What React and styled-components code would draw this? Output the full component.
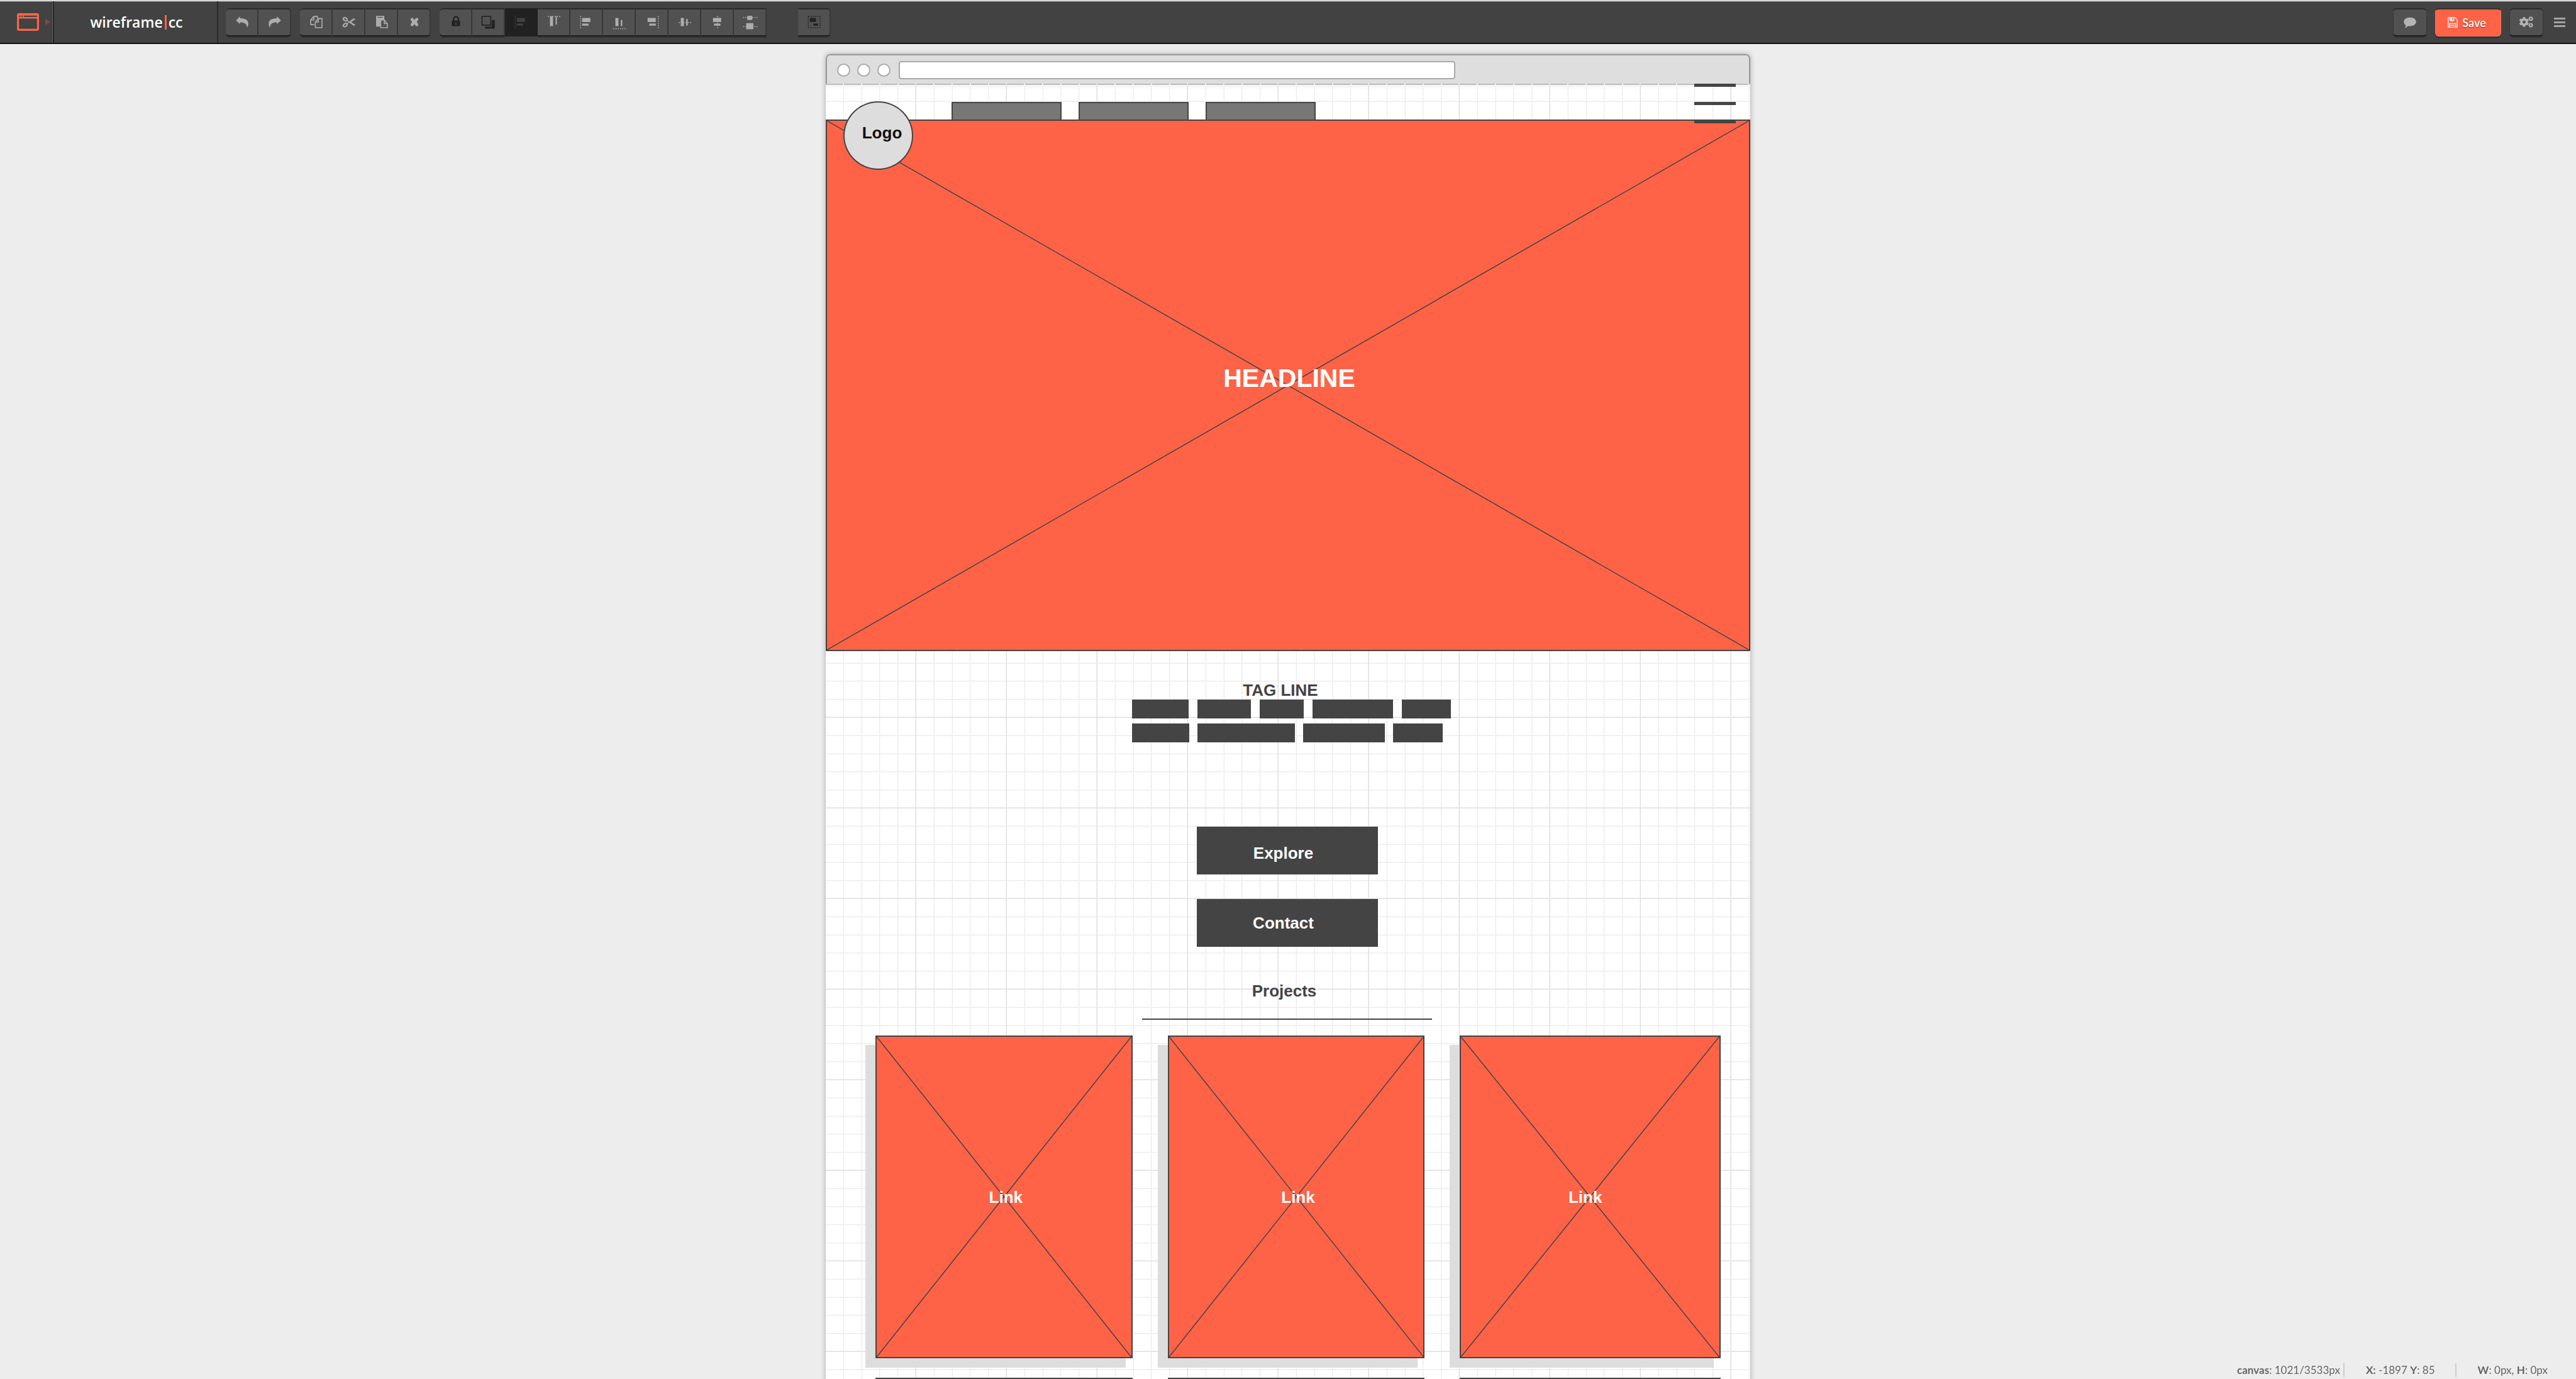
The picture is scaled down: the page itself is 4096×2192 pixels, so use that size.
import React from "react";
import styled, { createGlobalStyle, css } from "styled-components";
import { FaCogs } from "react-icons/fa";

const coral = "#ff6347";
const ink = "#444";
const lato = `Lato, "Open Sans", sans-serif`;
const helvetica = `"Liberation Sans", Arial, sans-serif`;

const GlobalStyle = createGlobalStyle`
  *, *::before, *::after { box-sizing: border-box; }
  body { margin: 0; background: #ededed; overflow: hidden; font-family: ${lato}; }
  button, input { font: inherit; margin: 0; padding: 0; }
  h1, h2, p { margin: 0; }
`;

const App = styled.div`
  display: flex;
  flex-direction: column;
  height: 100vh;
  overflow: hidden;
`;

/* ---------- toolbar ---------- */

const Toolbar = styled.header`
  flex: none;
  display: flex;
  align-items: stretch;
  height: 70px;
  background: #424242;
  border-top: 2px solid #dadada;
  border-bottom: 2px solid #111214;
  box-shadow: inset 0 1px 0 #777;
  padding-right: 17px;
`;

const ModeMenu = styled.button`
  display: flex;
  align-items: center;
  gap: 10px;
  width: 86px;
  padding-left: 27px;
  border: 0;
  border-right: 2px solid #292929;
  box-shadow: inset -1px 0 0 #5c5c5c;
  background: none;
`;

const Brand = styled.a`
  display: flex;
  align-items: center;
  justify-content: center;
  width: 261px;
  padding-left: 3px;
  border-right: 2px solid #292929;
  color: #fff;
  font: 600 23px/32px "Open Sans", "Noto Sans", sans-serif;
  text-decoration: none;
`;

const BrandBar = styled.span`
  width: 3px;
  height: 23px;
  margin: 0 3px;
  background: ${coral};
`;

const Tools = styled.div`
  display: flex;
  align-items: center;
  gap: 14px;
  padding-left: 12px;
`;

const ToolGroup = styled.div`
  display: flex;
  margin-left: ${(p) => (p.$apart ? "36px" : 0)};
`;

const raised = css`
  display: flex;
  align-items: center;
  justify-content: center;
  height: 45px;
  border: 0 solid #383838;
  border-top: 2px solid #2b2b2b;
  border-bottom: 2px solid #1e1e1e;
  background: #515151;
  box-shadow: 0 2px 0 #353535;
  color: #b4b4b4;
`;

const ToolButton = styled.button`
  ${raised}
  width: 52px;
  padding-left: 2px;
  border-right-width: 2px;
  color: ${(p) => (p.$off ? "#222" : "#adadad")};
  &:first-child {
    border-top-left-radius: ${(p) => (p.$squareStart ? 0 : "6px")};
    border-bottom-left-radius: ${(p) => (p.$squareStart ? 0 : "6px")};
  }
  &:last-child {
    border-top-right-radius: ${(p) => (p.$squareEnd ? 0 : "6px")};
    border-bottom-right-radius: ${(p) => (p.$squareEnd ? 0 : "6px")};
  }
  ${(p) =>
    p.$pressed &&
    css`
      background: #212121;
      border-color: #212121;
      box-shadow: none;
      color: #404040;
    `}
`;

const Actions = styled.div`
  display: flex;
  align-items: center;
  gap: 13px;
  margin-left: auto;
`;

const ActionButton = styled.button`
  ${raised}
  width: 54px;
  border-left-width: 1px;
  border-right-width: 1px;
  border-radius: 6px;
`;

const SaveButton = styled.button`
  display: flex;
  align-items: center;
  justify-content: center;
  gap: 7px;
  width: 105px;
  height: 45px;
  padding-right: 4px;
  border: 1px solid #fd7257;
  border-top: 2px solid #33302f;
  border-radius: 6px;
  background: ${coral};
  box-shadow: 0 3px 0 #353535;
  color: #f0f0f0;
  font: 700 18px/24px ${lato};
  text-shadow: 0 1px 1px rgba(90, 20, 10, 0.7);
`;

const PlainButton = styled.button`
  display: flex;
  margin-left: 4px;
  border: 0;
  background: none;
  color: #a3a3a3;
`;

/* ---------- browser frame ---------- */

const Workspace = styled.main`
  flex: 1;
  min-height: 0;
  display: flex;
  justify-content: center;
  align-items: flex-start;
  padding-top: 16px;
`;

const BrowserFrame = styled.div`
  width: 1470px;
  border-radius: 7px 7px 0 0;
  box-shadow: 0 0 9px rgba(0, 0, 0, 0.3);
`;

const BrowserBar = styled.div`
  display: flex;
  align-items: center;
  gap: 11px;
  height: 47px;
  padding: 2px 16px 0;
  border: 2px solid #999;
  border-bottom: 0;
  border-radius: 7px 7px 0 0;
  background: #dedede;
`;

const Dot = styled.span`
  width: 21px;
  height: 21px;
  border: 2px solid #ababab;
  border-radius: 50%;
  background: #fff;
`;

const AddressBox = styled.input`
  width: 885px;
  height: 29px;
  margin-left: 2px;
  border: 2px solid #a9a9a9;
  border-radius: 4px;
  background: #fff;
`;

const minor = (dir) => `linear-gradient(${dir},
  transparent 27px, #f8f8f8 27px, #f8f8f8 28px, #ececec 28px, #ececec 29px, transparent 29px,
  transparent 56px, #f8f8f8 56px, #f8f8f8 57px, #ececec 57px, #ececec 58px, transparent 58px,
  transparent 85px, #ececec 85px, #ececec 86px, #f8f8f8 86px, #f8f8f8 87px, transparent 87px,
  transparent 114px, #ececec 114px, #ececec 115px, #f8f8f8 115px, #f8f8f8 116px, transparent 116px)`;
const major = (dir) => `linear-gradient(${dir},
  transparent 142px, #efefef 142px, #efefef 143px, #dedede 143px, #dedede 144px)`;

const Canvas = styled.div`
  position: relative;
  height: 5088px;
  background:
    ${major("to right")} 0 0 / 144px 144px,
    ${major("to bottom")} 0 0 / 144px 144px,
    ${minor("to right")} 0 0 / 144px 144px,
    ${minor("to bottom")} 0 0 / 144px 144px,
    linear-gradient(#bdbdbd 2px, #f4f4f4 2px, #fff 10px) 0 0 / 100% 12px no-repeat,
    #fff;
  font-family: ${helvetica};
`;

/* ---------- wireframe content ---------- */

const NavRow = styled.div`
  display: flex;
  gap: 27px;
  height: 57px;
  padding: 29px 0 0 200px;
`;

const NavBlock = styled.div`
  width: 175px;
  border: 2px solid ${ink};
  border-bottom: 0;
  background: #777;
`;

const LogoCircle = styled.div`
  position: absolute;
  top: 28px;
  left: 28px;
  display: flex;
  align-items: center;
  justify-content: center;
  width: 111px;
  height: 109px;
  padding: 0 0 10px 12px;
  border: 2px solid ${ink};
  border-radius: 50%;
  background: #ddd;
  color: #111;
  font: 700 26px/30px ${helvetica};
`;

const Burger = styled.button`
  position: absolute;
  top: 0;
  right: 23px;
  display: grid;
  gap: 24px;
  width: 66px;
  border: 0;
  background: none;
`;

const BurgerLine = styled.span`
  height: 5px;
  background: ${ink};
`;

const imageBox = css`
  position: relative;
  display: flex;
  align-items: center;
  justify-content: center;
  border: 2px solid ${ink};
  background: ${coral};
  color: #fff;
  font-weight: 700;
`;

const Hero = styled.section`
  ${imageBox}
  height: 845px;
`;

const Headline = styled.h1`
  position: relative;
  padding: 0 0 24px 4px;
  font: 700 41px/48px ${helvetica};
`;

const CrossSvg = styled.svg`
  position: absolute;
  inset: 0;
  width: 100%;
  height: 100%;
`;

const Stack = styled.section`
  display: flex;
  flex-direction: column;
  align-items: center;
  padding-top: ${(p) => p.$top}px;
`;

const Title = styled.h2`
  padding-right: ${(p) => p.$shift || 12}px;
  color: ${ink};
  font: 700 26px/30px ${helvetica};
`;

const Words = styled.div`
  display: grid;
  gap: 8px;
  margin-left: 11px;
`;

const WordRow = styled.div`
  display: flex;
  gap: ${(p) => p.$gap}px;
`;

const Word = styled.span`
  width: ${(p) => p.$w}px;
  height: 30px;
  background: ${ink};
`;

const BigButton = styled.button`
  width: 288px;
  height: 76px;
  margin: 0 3px 39px 0;
  padding: ${(p) => p.$drop || 0}px 12px 0 0;
  border: 0;
  background: ${ink};
  color: #fff;
  font: 700 26px/30px ${helvetica};
`;

const Rule = styled.hr`
  width: 461px;
  height: 2px;
  margin: 29px 3px 25px 0;
  border: 0;
  background: ${ink};
`;

const Cards = styled.div`
  display: grid;
  grid-template-columns: 409fr 409fr 415fr;
  gap: 31px 56px;
  padding: 0 47px 0 79px;
`;

const Card = styled.a`
  ${imageBox}
  height: 513px;
  padding: 0 ${(p) => p.$right || 0}px 0 ${(p) => p.$left || 0}px;
  box-shadow: -16px 15px 0 #ddd, -11px 15px 0 #ddd;
  font: 700 26px/30px ${helvetica};
  text-decoration: none;
`;

const CardLabel = styled.span`
  position: relative;
`;

/* ---------- status ---------- */

const Status = styled.footer`
  position: fixed;
  right: 45px;
  bottom: 3px;
  display: flex;
  color: #666;
  font: 400 17px/24px ${lato};
`;

const StatusItem = styled.p`
  padding-right: ${(p) => p.$end || 0}px;
  margin-right: ${(p) => (p.$end ? 34 : 0)}px;
  border-right: ${(p) => (p.$end ? "2px solid #ccc" : 0)};
  line-height: 22px;
`;

/* ---------- icons ---------- */

const Icon = ({ children }) => (
  <svg width="26" height="26" viewBox="0 0 32 32" fill="currentColor" aria-hidden="true">
    {children}
  </svg>
);

const Dots = ({ d }) => (
  <path d={d} fill="none" stroke="currentColor" strokeWidth="2" strokeDasharray="2 2.4" />
);

const arrow = "M4 13 L12 5 V9 C22 9 28 12 28 19 C28 22 27 24 26.5 26 H25.5 C25 19 20 16.5 12 16.5 V20 Z";

const icons = {
  undo: <path d={arrow} />,
  redo: <path d={arrow} transform="matrix(-1 0 0 1 32 0)" />,
  copy: (
    <g fill="none" stroke="currentColor" strokeWidth="2">
      <path d="M12 21 H5 V12 L11 5 H18 V9 M11 5 V12 H5" />
      <path d="M20 9 H27 V27 H14 V16 Z M20 9 V16 H14" fill="#515151" />
    </g>
  ),
  cut: (
    <g fill="none" stroke="currentColor" strokeWidth="2">
      <ellipse cx="8.500" cy="10.500" rx="4" ry="2.800" transform="rotate(30 8.500 10.500)" strokeWidth="2.500" />
      <ellipse cx="8.500" cy="22" rx="4" ry="2.800" transform="rotate(-35 8.500 22)" strokeWidth="2.500" />
      <path d="M12 13 L25 22.500 L27 21.500 L17 15.500 M12 19.500 L25 9.500 L27 10.500 L17 17.500" strokeWidth="1.600" />
    </g>
  ),
  paste: (
    <g>
      <path d="M5 4 H21 V12 H15 L13 17 V25 H5 Z" />
      <path d="M8 7 H18" stroke="#515151" strokeWidth="1.500" />
      <path d="M15 12 H21 L27 19 V27 H14 V13 Z M21 12 V19 H27" fill="#515151" stroke="currentColor" strokeWidth="2" />
    </g>
  ),
  remove: <path d="M10 8 h3 l3 4 l3 -4 h3 l2 3 l-3.500 5 l3.500 5 l-2 3 h-3 l-3 -4 l-3 4 h-3 l-2 -3 l3.500 -5 l-3.500 -5 Z" />,
  lock: (
    <g>
      <path d="M11.500 14 V10 a4.500 4.500 0 0 1 9 0 V14" fill="none" stroke="currentColor" strokeWidth="2.600" />
      <rect x="8" y="13" width="16" height="11" rx="1.500" />
      <path d="M16 16 V22" stroke="#515151" strokeWidth="2" />
    </g>
  ),
  layers: (
    <g>
      <path d="M22 12 H28 V29 H9 V25 H22 Z" />
      <rect x="3" y="5" width="17" height="17" fill="none" stroke="currentColor" strokeWidth="2" />
    </g>
  ),
  left: (<g><Dots d="M4 4 V28" /><path d="M7 8h16v8h-16z M7 19h12.500v4h-12.500z" /></g>),
  top: (<g><Dots d="M4 5 H28" /><path d="M8 5h6v19h-6z M19 5h2.500v16h-2.500z" /></g>),
  bottom: (<g><Dots d="M4 29 H28" /><path d="M8 8h6v16h-6z M18.500 12h3v12h-3z" /></g>),
  right: (<g><Dots d="M28 4 V28" /><path d="M7 8h16v8h-16z M10.500 19h12.500v4h-12.500z" /></g>),
  middle: (<g><Dots d="M4 17 H28" /><path d="M8 8h6v16h-6z M18.500 10h3v13h-3z" /></g>),
  center: (<g><Dots d="M16 4 V28" /><path d="M7 8h16v8h-16z M9 19h12.500v4h-12.500z" /></g>),
  spread: (<g><Dots d="M2 7 H30 M2 25 H30" /><path d="M10 4h10v8h-10z M8 18h14v12h-14z" /></g>),
  group: (<g><Dots d="M4 5 H27 V27 H4 Z" /><path d="M7 8h12v8h-12z M14 19h9v4h-9z" /></g>),
};

const Tool = ({ name, label, ...rest }) => (
  <ToolButton type="button" aria-label={label} {...rest}>
    <Icon>{icons[name]}</Icon>
  </ToolButton>
);

const Cross = () => (
  <CrossSvg viewBox="0 0 100 100" preserveAspectRatio="none" aria-hidden="true">
    <path d="M0 0 L100 100 M100 0 L0 100" fill="none" stroke={ink} strokeWidth="1.500" vectorEffect="non-scaling-stroke" />
  </CrossSvg>
);

const firstWords = [90, 85, 70, 128, 78];
const secondWords = [91, 155, 130, 79];

export default function WireframeEditor() {
  return (
    <App>
      <GlobalStyle />
      <Toolbar>
        <ModeMenu type="button" aria-label="Canvas type">
          <svg width="35" height="28" viewBox="0 0 44 35" aria-hidden="true">
            <path fillRule="evenodd" fill={coral} d="M4 0 H40 Q44 0 44 4 V31 Q44 35 40 35 H4 Q0 35 0 31 V4 Q0 0 4 0 Z M4 10.500 V31 H40 V10.500 Z M14 4.500 V7.500 H40 V4.500 Z" />
            <path d="M4 4.500 h3 v3 h-3z M9 4.500 h3 v3 h-3z" fill="#424242" />
          </svg>
          <svg width="8" height="10" viewBox="0 0 8 10" aria-hidden="true">
            <path d="M0 0 L8 5 L0 10 Z" fill="#85493f" />
          </svg>
        </ModeMenu>
        <Brand href="#home">
          wireframe<BrandBar />cc
        </Brand>
        <Tools>
          <ToolGroup>
            <Tool name="undo" label="Undo" />
            <Tool name="redo" label="Redo" />
          </ToolGroup>
          <ToolGroup>
            <Tool name="copy" label="Copy" />
            <Tool name="cut" label="Cut" />
            <Tool name="paste" label="Paste" />
            <Tool name="remove" label="Delete" />
          </ToolGroup>
          <ToolGroup>
            <Tool name="lock" label="Lock" $off />
            <Tool name="layers" label="Order" $off />
            <Tool name="left" label="Align" $pressed />
            <Tool name="top" label="Align top" />
            <Tool name="left" label="Align left" />
            <Tool name="bottom" label="Align bottom" />
            <Tool name="right" label="Align right" />
            <Tool name="middle" label="Align middle" />
            <Tool name="center" label="Align center" />
            <Tool name="spread" label="Distribute" $squareEnd />
          </ToolGroup>
          <ToolGroup $apart>
            <Tool name="group" label="Group" $off $squareStart />
          </ToolGroup>
        </Tools>
        <Actions>
          <ActionButton type="button" aria-label="Comments">
            <Icon>
              <path d="M16 7 C23 7 28 10.500 28 15.500 C28 20.500 23 24 16 24 C14.500 24 13 24 12 23.600 C10 26 8 27 5.500 27.500 C7 26 8 24.500 8 22.500 C5.500 21 4 18.500 4 15.500 C4 10.500 9 7 16 7 Z" />
            </Icon>
          </ActionButton>
          <SaveButton type="button">
            <svg width="16" height="17" viewBox="0 0 20 21" fill="none" stroke="currentColor" strokeWidth="1.600" aria-hidden="true">
              <path d="M1 1 H14 L19 6 V20 H1 Z M4 20 V13 H16 V20 M6 16.500 H14" />
              <path d="M4 1 H13 V8 H4 Z M9 2.500 V6 H11 V2.500 Z" fill="currentColor" fillRule="evenodd" stroke="none" />
            </svg>
            Save
          </SaveButton>
          <ActionButton type="button" aria-label="Settings">
            <FaCogs size={22} />
          </ActionButton>
          <PlainButton type="button" aria-label="Menu">
            <svg width="18" height="15" viewBox="0 0 18 15" fill="currentColor" aria-hidden="true">
              <path d="M0 0h18v3h-18z M0 6h18v3h-18z M0 12h18v3h-18z" />
            </svg>
          </PlainButton>
        </Actions>
      </Toolbar>

      <Workspace>
        <BrowserFrame>
          <BrowserBar>
            <Dot />
            <Dot />
            <Dot />
            <AddressBox type="text" aria-label="Address" />
          </BrowserBar>
          <Canvas>
            <NavRow>
              <NavBlock />
              <NavBlock />
              <NavBlock />
            </NavRow>
            <Hero>
              <Cross />
              <Headline>HEADLINE</Headline>
            </Hero>
            <LogoCircle>Logo</LogoCircle>
            <Burger type="button" aria-label="Site menu">
              <BurgerLine />
              <BurgerLine />
              <BurgerLine />
            </Burger>
            <Stack $top={47}>
              <Title $shift={24}>TAG LINE</Title>
              <Words>
                <WordRow $gap={14}>
                  {firstWords.map((w) => <Word key={w} $w={w} />)}
                </WordRow>
                <WordRow $gap={13}>
                  {secondWords.map((w) => <Word key={w} $w={w} />)}
                </WordRow>
              </Words>
            </Stack>
            <Stack $top={134}>
              <BigButton type="button" $drop={8}>Explore</BigButton>
              <BigButton type="button">Contact</BigButton>
            </Stack>
            <Stack $top={16}>
              <Title>Projects</Title>
              <Rule />
            </Stack>
            <Cards>
              <Card href="#one" $left={6}><Cross /><CardLabel>Link</CardLabel></Card>
              <Card href="#two" $left={6}><Cross /><CardLabel>Link</CardLabel></Card>
              <Card href="#three" $right={16}><Cross /><CardLabel>Link</CardLabel></Card>
              <Card href="#four"><Cross /></Card>
              <Card href="#five"><Cross /></Card>
              <Card href="#six"><Cross /></Card>
            </Cards>
          </Canvas>
        </BrowserFrame>
      </Workspace>

      <Status>
        <StatusItem $end={5}><b>canvas</b>: 1021/3533px</StatusItem>
        <StatusItem $end={32}><b>X:</b> -1897 <b>Y</b>: 85</StatusItem>
        <StatusItem><b>W</b>: 0px, <b>H</b>: 0px</StatusItem>
      </Status>
    </App>
  );
}
